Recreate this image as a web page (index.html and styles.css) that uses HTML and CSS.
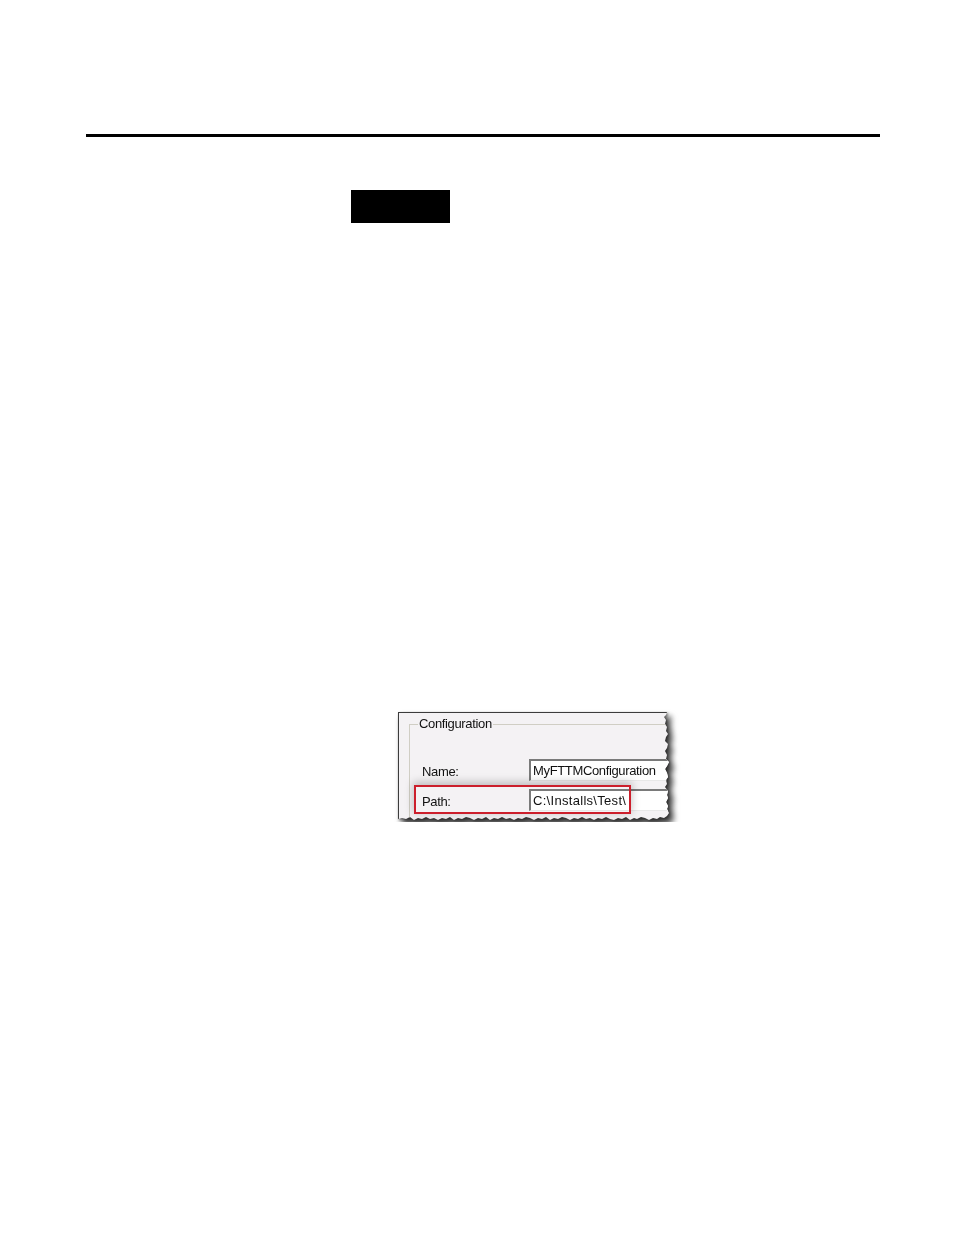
FILE: index.html
```html
<!DOCTYPE html>
<html>
<head>
<meta charset="utf-8">
<link rel="stylesheet" href="styles.css">
</head>
<body>
<div class="page">
  <div class="rule"></div>
  <div class="blackbox"></div>
  <div class="shot-wrap">
    <div class="shot">
      <fieldset class="group">
        <legend>Configuration</legend>
        <div class="row name-row">
          <span class="lbl">Name:</span>
          <span class="field">MyFTTMConfiguration</span>
        </div>
        <div class="row path-row">
          <span class="lbl">Path:</span>
          <span class="field path">C:\Installs\Test\</span>
        </div>
      </fieldset>
      <div class="callout"></div>
    </div>
  </div>
</div>
</body>
</html>
```

FILE: styles.css
```css
html, body {
  margin: 0;
  padding: 0;
  background: #ffffff;
}

.page {
  display: flex;
  flex-direction: column;
  align-items: flex-start;
  font-family: "Liberation Sans", Arial, sans-serif;
}

.rule {
  margin-top: 134px;
  margin-left: 86px;
  width: 794px;
  height: 3px;
  background: #000;
}

.blackbox {
  margin-top: 53px;
  margin-left: 351px;
  width: 99px;
  height: 33px;
  background: #000;
}

.shot-wrap {
  margin-top: 489px;
  margin-left: 398px;
  filter: drop-shadow(4px 5px 3px rgba(0, 0, 0, 0.7)) drop-shadow(1px 1px 1px rgba(0, 0, 0, 0.5));
}

.shot {
  position: relative;
  width: 272px;
  height: 110px;
  box-sizing: border-box;
  background: #f4f2f4;
  border-top: 1px solid #3c3c3c;
  border-left: 1px solid #3c3c3c;
  overflow: hidden;
  clip-path: polygon(0 0, 269px 0, 268px 3px, 266px 5px, 268px 8px, 267px 12px, 269px 15px, 268px 19px, 270px 22px, 268px 25px, 267px 29px, 270px 32px, 269px 36px, 267px 39px, 269px 43px, 268px 47px, 271px 50px, 269px 54px, 267px 57px, 269px 61px, 270px 65px, 268px 68px, 269px 72px, 267px 75px, 270px 79px, 269px 83px, 270px 86px, 268px 90px, 270px 94px, 269px 97px, 271px 101px, 269px 104px, 266px 106px, 262px 105px, 259px 107px, 255px 106px, 251px 108px, 247px 106px, 243px 105px, 239px 107px, 236px 106px, 232px 108px, 228px 105px, 224px 107px, 220px 106px, 216px 108px, 212px 107px, 208px 105px, 204px 107px, 200px 106px, 196px 108px, 192px 106px, 188px 107px, 184px 105px, 180px 107px, 176px 106px, 172px 108px, 168px 106px, 164px 105px, 160px 107px, 156px 106px, 152px 108px, 148px 105px, 144px 107px, 140px 106px, 136px 108px, 132px 106px, 128px 105px, 124px 107px, 120px 106px, 116px 108px, 112px 106px, 108px 107px, 104px 105px, 100px 107px, 96px 106px, 92px 108px, 88px 105px, 84px 107px, 80px 106px, 76px 108px, 72px 106px, 68px 105px, 64px 107px, 60px 106px, 56px 108px, 52px 105px, 48px 107px, 44px 106px, 40px 108px, 36px 106px, 32px 107px, 28px 105px, 24px 107px, 20px 106px, 16px 108px, 12px 105px, 8px 107px, 4px 106px, 0 107px);
}

.group {
  margin: 4px -30px 0 10px;
  padding: 28px 0 20px 12px;
  border: 1px solid #d0cec4;
  border-bottom: none;
  font-size: 13px;
  line-height: 14px;
  color: #111;
  display: flex;
  flex-direction: column;
  gap: 8px;
}

.group legend {
  margin-left: -4px;
  padding: 0 1px 0 1px;
  font-size: 13px;
  line-height: 14px;
  letter-spacing: -0.35px;
}

.row {
  display: flex;
  align-items: center;
  height: 22px;
}

.lbl {
  width: 107px;
  flex: none;
  padding-top: 3px;
  letter-spacing: -0.35px;
}

.field {
  flex: 1;
  height: 22px;
  box-sizing: border-box;
  background: #ffffff;
  border-top: 2px solid #7a7a7a;
  border-left: 2px solid #7a7a7a;
  border-right: 1px solid #e8e8e8;
  border-bottom: 1px solid #e8e8e8;
  padding: 2px 0 0 2px;
  line-height: 16px;
  white-space: nowrap;
  letter-spacing: -0.35px;
}

.field.path {
  letter-spacing: 0.3px;
}

.callout {
  position: absolute;
  left: 15px;
  top: 72px;
  width: 217px;
  height: 29px;
  box-sizing: border-box;
  border: 2px solid #cc1f2c;
  box-shadow: 0 -2px 8px 1px rgba(0, 0, 0, 0.22);
}
```
